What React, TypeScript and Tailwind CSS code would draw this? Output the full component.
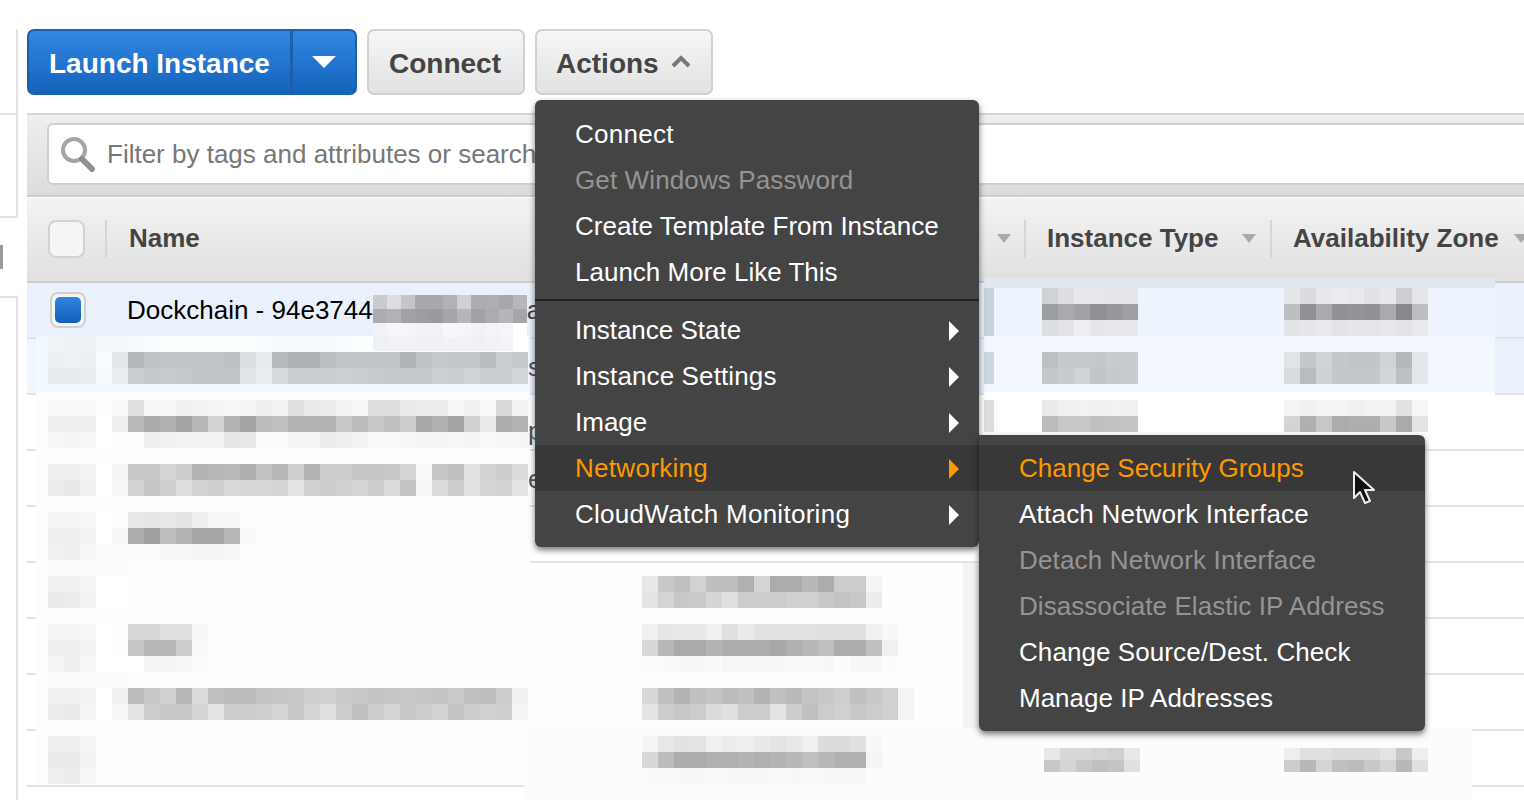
import React from "react";

type Tint = [number, number, number];

function shade(v: string, t: Tint) {
  const g = parseInt(v, 16);
  const c = (n: number) => Math.min(255, Math.max(0, g + n));
  return `rgb(${c(t[0])},${c(t[1])},${c(t[2])})`;
}

function Mosaic({
  rows,
  tint = [0, 0, 0],
  cell = "h-4 w-4",
  className = "",
}: {
  rows: string[];
  tint?: Tint;
  cell?: string;
  className?: string;
}) {
  return (
    <div className={`flex shrink-0 flex-col ${className}`}>
      {rows.map((r, i) => (
        <div key={i} className="flex">
          {r.split(" ").map((v, j) => (
            <div key={j} className={`shrink-0 ${cell}`} style={{ backgroundColor: shade(v, tint) }} />
          ))}
        </div>
      ))}
    </div>
  );
}

const BLUE: Tint = [-5, 0, 3];
const SOFT: Tint = [-2, 2, 4];

const L2 = [
  "f2 f0 f0 f6 f6 f8 fa fc fc fe fe fe fe fa f8 f8 f8 f8 fa fc fe fe fe fe fe fe fe fe fe fe",
  "ee f0 ee fb e6 b6 c0 c4 c4 c4 c4 be dc ea b8 b0 b0 bc c2 c2 c4 c4 b2 c0 c8 c6 c6 ba cc c8",
  "ea ea ec f8 ec cc c8 ca c8 c4 c4 c4 e2 ec d8 cc cc cc ce cc ca c8 c8 c8 ce cc d2 cc cc d4",
];
const L3 = [
  "fa fa fa fe fa e0 f6 f6 f0 f2 f4 f6 f4 ee f2 e0 ea ec f2 f6 de de ea ec ec f6 f0 fa da f2",
  "ef ee ee ff ee ba aa b0 a5 b8 d2 b4 a4 bc c0 b4 b4 b4 c8 bc c8 c0 cc a8 b0 a4 d0 ea ac b4",
  "f7 f5 f7 ff fd fd ef f0 f2 f3 f3 e7 e8 fb fb f4 f4 ed ef f2 fa fa f7 f5 f5 f7 f5 fa f8 f6",
];
const L4 = [
  "fd fd fd fe fe fe fe fe fe fe fe fe fe fe fe fe fe fe fe fe fe fe fe fe fe fe fe fe fe fe",
  "ef ee f2 ff f5 c8 c8 d4 cc b4 b8 ba ae c2 b8 cf b4 cc cc c6 c6 c8 d4 fa c6 c0 e2 d2 cc dc",
  "ec e8 f0 ff f8 d2 c6 ce de d2 ce da d8 d8 d6 e4 d0 cc d0 d4 cc dc c4 f8 dc cc e2 d4 d2 e4",
];
const L5 = [
  "f5 f5 f6 ff fd e8 e6 e8 e4 ee f8 f8 fd",
  "ee ee f2 ff f6 ac 9f be b4 a6 a6 b8 fa",
  "f0 ee f8 fc fc fc fc f8 f8 f5 f5 f6 fd",
];
const L6 = ["fb fb fb fc fc", "f0 f0 f5 ff ff", "ea ec f3 ff ff"];
const L7 = [
  "f5 f5 f7 ff fd d8 d8 e0 e0 f8",
  "ee ee f2 ff fd c6 b8 b8 cc fa",
  "f5 ee f8 ff ff ff f5 f5 f8 fc",
];
const L8 = [
  "fb fb fb fc fc fd fd fd fd fd",
  "f0 f0 f3 ff f0 bc c8 d0 b8 dc c0 bc bc c4 c6 c8 ce d0 ca c8 c4 c6 c8 c6 c4 ca bf bd cc f0",
  "ed eb f4 ff f7 e4 cc c8 c8 d4 e4 cc cc cf d4 c8 d4 e0 cc c0 cc d4 c8 cc d2 c4 cc d0 cf f4",
];
const L9 = ["ee ef f5", "ea ea f2", "ee ec f6"];

const M6 = [
  "e8 c8 c0 d2 be be b0 d4 ac ac b8 ac cc cc f4",
  "e4 d4 c8 ca d6 e0 cc cc cc d0 d0 c8 c4 c8 ec",
];
const M7 = [
  "f0 e6 e8 e8 f0 e0 ea e2 e2 e2 e2 e0 e0 e0 f0 f8",
  "d8 b8 aa aa b4 ac ac ac a8 b0 b8 c0 ac ac c0 f0",
  "fc fa f8 f8 fa f6 f6 f6 f8 fa fa f8 fc f8 f8 fc",
];
const M8 = [
  "d8 c0 b4 c0 c4 bc c0 b4 c0 ba c4 c8 ce c0 c8 d0 f4",
  "e4 cc c8 cc dc e0 cc cc e4 cc c0 cc d0 c8 cc d0 f4",
];
const M9 = [
  "f4 e8 e2 e4 f0 ec ee e8 e4 e8 f0 dc dc e0 f8",
  "d8 bc ac ac b0 b0 b4 b0 b4 b8 c0 b8 b0 b0 f4",
  "fa fa f8 f8 fa f8 f8 f8 fa f8 fa f8 f8 f8 fc",
];

const LEFT_MASK = "-mt-[3px] flex h-14 w-[494px] shrink-0 items-start pl-3";

function Caret({ className = "" }: { className?: string }) {
  return (
    <svg viewBox="0 0 14 9" className={`h-[9px] w-[14px] shrink-0 ${className}`}>
      <path d="M0 0h14L7 9z" fill="#a9a9a9" />
    </svg>
  );
}

function Arrow({ color }: { color: string }) {
  return (
    <svg viewBox="0 0 10 20" className="mt-px h-5 w-[10px] shrink-0">
      <path d="M0 0l10 10L0 20z" fill={color} />
    </svg>
  );
}

function Item({
  label,
  disabled,
  arrow,
  active,
  track = "",
  children,
}: {
  label: string;
  disabled?: boolean;
  arrow?: boolean;
  active?: boolean;
  track?: string;
  children?: React.ReactNode;
}) {
  const tone = disabled ? "text-[#949494]" : active ? "text-[#ff9900]" : "text-white";
  return (
    <div
      className={`relative flex h-[46px] items-center justify-between pl-10 pr-5 text-[26px] leading-none ${tone} ${
        active ? "bg-[#383838]" : ""
      }`}
    >
      <span className={`whitespace-nowrap ${track}`}>{label}</span>
      {arrow && <Arrow color={active ? "#ff9900" : "#ffffff"} />}
      {children}
    </div>
  );
}

function Cursor() {
  return (
    <svg viewBox="0 0 24 36" className="absolute left-[373px] top-[35px] h-9 w-6">
      <path
        d="M2 2v26l6-6 5 11 5-2-5-11h9z"
        fill="#111"
        stroke="#eee"
        strokeWidth="2"
        strokeLinejoin="round"
      />
    </svg>
  );
}

function Menus() {
  return (
    <div className="absolute left-0 top-[71px] z-20 w-[444px] rounded-md bg-[#444444] pb-[10px] pt-[11px] shadow-[0_3px_6px_rgba(0,0,0,0.55)]">
      <Item label="Connect" track="tracking-[0.28px]" />
      <Item label="Get Windows Password" disabled track="tracking-[0.12px]" />
      <Item label="Create Template From Instance" />
      <Item label="Launch More Like This" />
      <div className="mb-[6px] mt-1 h-[2px] bg-[#222222]" />
      <Item label="Instance State" arrow />
      <Item label="Instance Settings" arrow track="tracking-[0.12px]" />
      <Item label="Image" arrow />
      <Item label="Networking" arrow active track="tracking-[0.3px]">
        <div className="absolute left-full top-[-10px] w-[446px] rounded-r-md rounded-bl-md bg-[#444444] py-[10px] shadow-[0_3px_6px_rgba(0,0,0,0.55)]">
          <Item label="Change Security Groups" active />
          <Item label="Attach Network Interface" track="tracking-[0.22px]" />
          <Item label="Detach Network Interface" disabled track="tracking-[0.16px]" />
          <Item label="Disassociate Elastic IP Address" disabled track="tracking-[0.06px]" />
          <Item label="Change Source/Dest. Check" track="tracking-[0.08px]" />
          <Item label="Manage IP Addresses" />
          <Cursor />
        </div>
      </Item>
      <Item label="CloudWatch Monitoring" arrow track="tracking-[0.28px]" />
    </div>
  );
}

function Toolbar() {
  return (
    <div className="flex h-[113px] items-start gap-[10px] pt-[29px]">
      <div className="flex h-[66px] w-[330px] overflow-hidden rounded-[7px] border-2 border-[#1a5fb0] bg-gradient-to-b from-[#3187e0] to-[#1463bd]">
        <div className="flex w-[261px] items-center pl-5 pt-[3px] text-[28px] font-bold text-white">Launch Instance</div>
        <div className="w-[3px] bg-[#1b5fae]" />
        <div className="flex flex-1 items-center justify-center">
          <svg viewBox="0 0 24 12" className="h-3 w-6">
            <path d="M0 0h24L12 12z" fill="#fff" />
          </svg>
        </div>
      </div>
      <div className="flex h-[66px] w-[158px] items-center rounded-[7px] border-2 border-[#d0d0d0] bg-gradient-to-b from-[#f6f6f6] to-[#e2e2e2] pl-5 pt-[3px] text-[28px] font-bold text-[#444444]">
        Connect
      </div>
      <div className="relative">
        <div className="flex h-[66px] w-[178px] items-center rounded-[7px] border-2 border-[#d0d0d0] bg-gradient-to-b from-[#f6f6f6] to-[#e2e2e2] pl-[19px] pt-[3px] text-[28px] font-bold text-[#444444]">
          Actions
          <svg viewBox="0 0 20 13" className="-mt-[5px] ml-3 h-[13px] w-5">
            <path d="M2 11l8-8 8 8" fill="none" stroke="#777" strokeWidth="4" />
          </svg>
        </div>
        <Menus />
      </div>
    </div>
  );
}

function FilterBar() {
  return (
    <div className="h-[84px] border-y-2 border-b-[#cdcdcd] border-t-[#d4d4d4] bg-gradient-to-b from-[#efefef] to-[#dcdcdc] pl-5 pt-2">
      <div className="flex h-[62px] items-center rounded-l-md border-2 border-r-0 border-[#cfcfcf] bg-white pl-[11px] text-[26px] text-[#777777]">
        <svg viewBox="0 0 36 36" className="h-9 w-9 shrink-0">
          <circle cx="14" cy="14" r="11" fill="none" stroke="#a6a6a6" strokeWidth="4" />
          <path d="M22 23l10 10" stroke="#8f8f8f" strokeWidth="6" strokeLinecap="round" />
        </svg>
        <span className="ml-[11px] whitespace-nowrap">Filter by tags and attributes or search</span>
      </div>
    </div>
  );
}

function Header() {
  const title = "whitespace-nowrap text-[26px] font-bold text-[#444444]";
  return (
    <div className="mt-px flex h-[85px] items-center border-b-2 border-[#cdcdcd] bg-gradient-to-b from-[#f3f3f3] to-[#e0e0e0] pb-[2px] pl-[21px]">
      <div className="h-[38px] w-[37px] shrink-0 rounded-lg border-2 border-[#d2d2d2] bg-[#f5f5f5]" />
      <div className="ml-5 flex h-[38px] w-[919px] shrink-0 items-center border-l-2 border-[#d6d6d6] pl-[22px] pr-[13px]">
        <span className={title}>Name</span>
        <Caret className="ml-auto" />
      </div>
      <div className="flex h-[38px] w-[246px] shrink-0 items-center border-l-2 border-[#d6d6d6] pl-[21px] pr-[14px]">
        <span className={title}>Instance Type</span>
        <Caret className="ml-auto" />
      </div>
      <div className="flex h-[38px] min-w-0 flex-1 items-center border-l-2 border-[#d6d6d6] pl-[21px]">
        <span className={title}>Availability Zone</span>
        <Caret className="ml-[15px]" />
      </div>
    </div>
  );
}

function Clipped({ ch }: { ch: string }) {
  return <span className="mt-[16px] text-[26px] leading-[30px] text-[#555555]">{ch}</span>;
}

function RightMosaics({ rows, az, tint }: { rows: string[]; az: string[]; tint?: Tint }) {
  return (
    <>
      <Mosaic rows={rows} tint={tint} className="ml-[48px]" />
      <Mosaic rows={az} tint={tint} className="ml-[146px]" />
    </>
  );
}

function Rows() {
  return (
    <div>
      {/* row 1 */}
      <div className="flex h-14 items-start border-b-2 border-[#dfe3ea] bg-[#eaf1fc]">
        <div className="w-[9px] shrink-0" />
        <div className="flex h-full w-[494px] shrink-0 items-center pl-[14px]">
          <div className="flex h-9 w-9 shrink-0 items-center justify-center rounded-lg border-2 border-[#d0d0d0] bg-[#f4f4f4]">
            <div className="h-[26px] w-[26px] rounded-[5px] bg-gradient-to-b from-[#3085df] to-[#1261bb]" />
          </div>
          <span className="ml-[41px] whitespace-nowrap text-[26px] text-black">Dockchain - 94e3744</span>
          <Mosaic
            className="relative z-10 mt-3 self-start"
            cell="h-[14px] w-[14px]"
            tint={[0, 2, 6]}
            rows={[
              "c9 dc c4 a7 a7 b0 cf ab ac a6 b5",
              "ab b0 a0 9c 98 a4 b4 a0 aa b4 a4",
              "f0 f4 f4 f0 f0 f6 f4 f0 f2 f4 ff",
              "ee f0 f0 ef ee f0 f0 ee f0 f2 ff",
            ]}
          />
          <span className="self-center text-[26px] text-[#444444]">a</span>
        </div>
        <div className="w-[454px] shrink-0" />
        <div className="-mt-[5px] h-[61px] w-[511px] shrink-0 bg-[#eef4fd]">
          <div className="h-[10px] bg-[#e3e7ee]" />
          <div className="flex">
            <div className="h-[48px] w-[10px] shrink-0 bg-[#c8d1de]" />
            <RightMosaics
              tint={[0, 2, 6]}
              rows={[
                "d0 dc e6 e6 e4 e4",
                "9c a8 a0 8f 96 9e",
                "dc e2 ec e4 e6 e6",
              ]}
              az={[
                "e4 da e6 ea e8 e0 e6 cc e4",
                "bc 8f a8 90 92 90 a8 86 bc",
                "e2 e4 e8 e2 e4 e4 e6 e2 e8",
              ]}
            />
          </div>
        </div>
      </div>

      {/* row 2 */}
      <div className="flex h-14 items-start border-b-2 border-[#dfe3ea] bg-[#eaf1fc]">
        <div className="h-[54px] w-[9px] shrink-0 bg-[#eff6fe]" />
        <div className={`${LEFT_MASK} bg-[#f1f8fe]`}>
          <Mosaic rows={L2} tint={SOFT} />
          <Clipped ch="s" />
        </div>
        <div className="w-[454px] shrink-0" />
        <div className="-mt-[3px] flex h-14 w-[511px] shrink-0 items-start bg-[#f2f8fe] pt-[16px]">
          <div className="h-[32px] w-[10px] shrink-0 bg-[#cdd6e0]" />
          <RightMosaics
            tint={BLUE}
            rows={["c0 ca ca c8 cc cc", "c8 cc d4 c6 ca cc"]}
            az={["e4 c8 d4 c8 c6 c6 d4 b8 e6", "dc bc d2 c8 c8 c8 d6 c0 e6"]}
          />
        </div>
      </div>

      {/* row 3 */}
      <div className="flex h-14 items-start border-b-2 border-[#e3e3e3] bg-white">
        <div className="h-[54px] w-[9px] shrink-0" />
        <div className={`${LEFT_MASK} bg-[#fdfdfd] pt-2`}>
          <Mosaic rows={L3} />
          <Clipped ch="p" />
        </div>
        <div className="w-[454px] shrink-0" />
        <div className="-mt-[3px] flex h-[44px] w-[511px] shrink-0 items-start bg-white pt-2">
          <div className="h-[32px] w-[10px] shrink-0 bg-[#dcdcdc]" />
          <RightMosaics
            rows={["ea f0 f2 f0 f2 f0", "bc c8 c8 c0 c2 c4"]}
            az={["f4 f0 f4 f4 f0 f2 f2 e2 f6", "d4 b0 c8 ac ae ae c8 aa e4"]}
          />
        </div>
      </div>

      {/* row 4 */}
      <div className="flex h-14 items-start border-b-2 border-[#e3e3e3] bg-white">
        <div className="w-[9px] shrink-0" />
        <div className={`${LEFT_MASK} bg-[#fdfdfd]`}>
          <Mosaic rows={L4} />
          <Clipped ch="e" />
        </div>
      </div>

      {/* row 5 */}
      <div className="flex h-14 items-start border-b-2 border-[#e3e3e3] bg-white">
        <div className="w-[9px] shrink-0" />
        <div className={`${LEFT_MASK} bg-[#fdfdfd] pt-2`}>
          <Mosaic rows={L5} />
        </div>
      </div>

      {/* row 6 */}
      <div className="flex h-14 items-start border-b-2 border-[#e3e3e3] bg-white">
        <div className="w-[9px] shrink-0" />
        <div className={`${LEFT_MASK} bg-[#fdfdfd]`}>
          <Mosaic rows={L6} />
        </div>
        <div className="flex h-[54px] w-[449px] shrink-0 items-start justify-between bg-[#fdfdfd] pl-[112px] pt-[13px]">
          <Mosaic rows={M6} />
          <div className="-mt-[13px] h-[56px] w-4 bg-[#f3f3f3]" />
        </div>
      </div>

      {/* row 7 */}
      <div className="flex h-14 items-start border-b-2 border-[#e3e3e3] bg-white">
        <div className="w-[9px] shrink-0" />
        <div className={`${LEFT_MASK} bg-[#fdfdfd] pt-2`}>
          <Mosaic rows={L7} />
        </div>
        <div className="-mt-[3px] flex h-14 w-[449px] shrink-0 items-start justify-between bg-[#fdfdfd] pl-[112px] pt-2">
          <Mosaic rows={M7} />
          <div className="-mt-2 h-14 w-4 bg-[#f3f3f3]" />
        </div>
      </div>

      {/* row 8 */}
      <div className="flex h-14 items-start border-b-2 border-[#e3e3e3] bg-white">
        <div className="w-[9px] shrink-0" />
        <div className={`${LEFT_MASK} bg-[#fdfdfd]`}>
          <Mosaic rows={L8} />
        </div>
        <div className="-mt-[3px] flex h-14 w-[449px] shrink-0 items-start justify-between bg-[#fdfdfd] pl-[112px] pt-4">
          <Mosaic rows={M8} />
          <div className="-mt-4 h-14 w-4 bg-[#f3f3f3]" />
        </div>
      </div>

      {/* row 9 */}
      <div className="flex h-14 items-start border-b-2 border-[#e3e3e3] bg-white">
        <div className="w-[9px] shrink-0" />
        <div className="-mt-[3px] flex h-14 w-[488px] shrink-0 items-start bg-[#fdfdfd] pl-3 pt-2">
          <Mosaic rows={L9} />
        </div>
        <div className="-mt-[3px] flex h-[72px] w-[948px] shrink-0 items-start bg-[#fcfcfc] pl-[118px] pt-2">
          <Mosaic rows={M9} />
          <Mosaic
            className="ml-[162px] mt-3"
            cell="h-3 w-4"
            rows={["e8 d8 d8 d4 d0 e8", "c8 d4 c8 c0 c4 e0"]}
          />
          <Mosaic
            className="ml-[144px] mt-3"
            cell="h-3 w-4"
            rows={["ee e0 e0 dc dc dc e4 c8 ee", "cc b8 d4 c0 bc c8 d4 b8 e0"]}
          />
        </div>
      </div>
    </div>
  );
}

function Sidebar() {
  return (
    <div className="flex w-[18px] shrink-0 flex-col pt-[29px]">
      <div className="h-[86px] border-b-2 border-r-2 border-[#e3e3e3]" />
      <div className="h-[103px] border-b-2 border-r-2 border-[#e3e3e3]" />
      <div className="mt-[27px] h-[24px] w-[3px] bg-[#9a9a9a]" />
      <div className="mt-[27px] flex-1 border-r-2 border-t-2 border-[#e3e3e3]" />
    </div>
  );
}

export default function App() {
  return (
    <div className="flex h-[800px] w-[1524px] overflow-hidden bg-white font-['Liberation_Sans',Arial,sans-serif]">
      <Sidebar />
      <div className="ml-[9px] min-w-0 flex-1">
        <Toolbar />
        <FilterBar />
        <Header />
        <Rows />
      </div>
    </div>
  );
}
